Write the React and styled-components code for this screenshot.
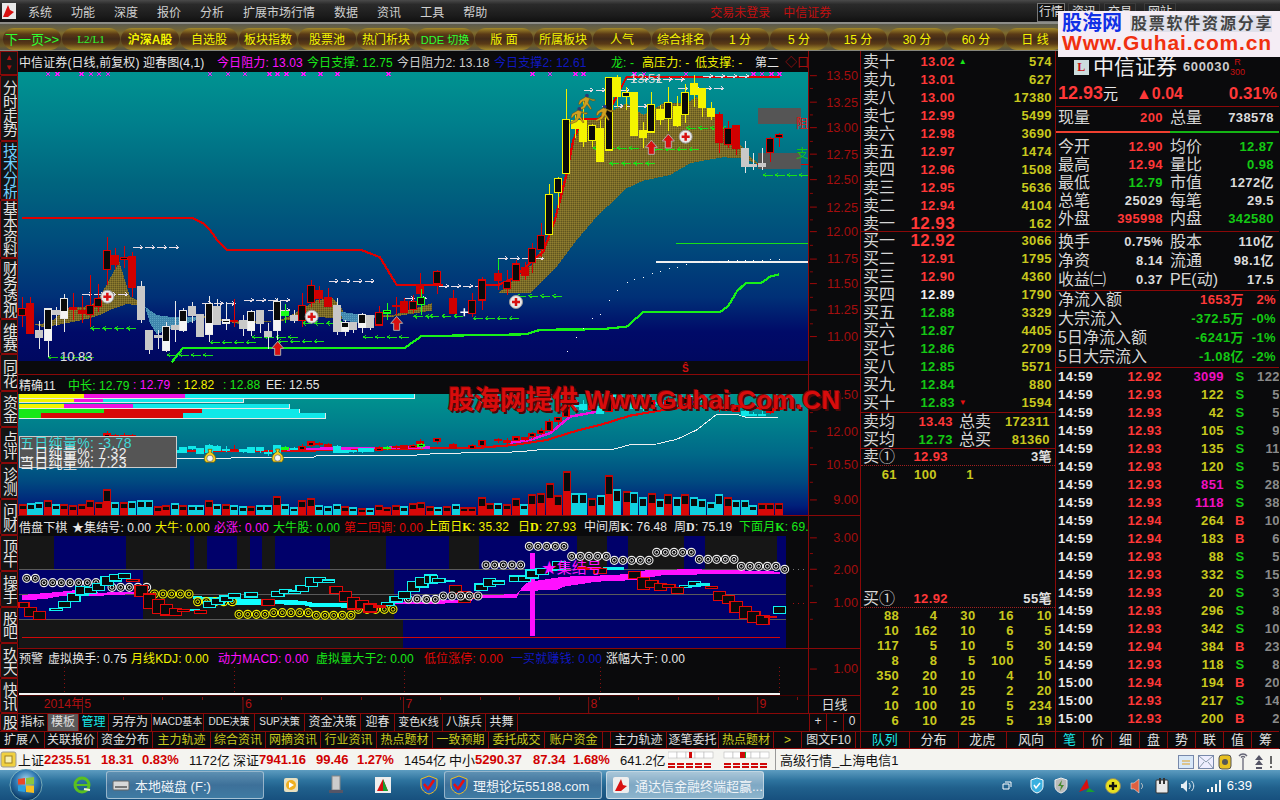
import React from "react";
import styled, { createGlobalStyle } from "styled-components";

const FONT = `"Liberation Sans","Noto Sans CJK SC",sans-serif`;
const RED = "#ff3838", YEL = "#c8c81e", GRN = "#14c814", LAB = "#d6d6d6", DR = "#8a0808";

const Global = createGlobalStyle`
  html, body { margin: 0; padding: 0; background: #0a0a0c; }
  * { box-sizing: border-box; }
  body { font-family: ${FONT}; }
`;
const Win = styled.div`width:1280px;height:800px;position:relative;overflow:hidden;display:flex;flex-direction:column;background:#0a0a0c;color:${LAB};font-family:${FONT};`;

/* ---------- menu + toolbar ---------- */
const MenuBar = styled.div`height:22px;display:flex;align-items:center;background:linear-gradient(#4a4a4a,#2a2a2a 20%,#1c1c1c 70%,#111);position:relative;padding-left:28px;font-size:12px;color:#d0d0d0;`;
const Logo = styled.svg`position:absolute;left:2px;top:3px;`;
const MenuItem = styled.span`margin-right:19px;white-space:nowrap;`;
const Alert = styled.span`color:#c01010;font-size:12px;white-space:nowrap;margin-left:${p => p.$ml}px;`;
const MiniTab = styled.span`position:absolute;top:3px;left:${p => p.$l}px;width:${p => p.$w}px;height:19px;text-align:center;font-size:12px;line-height:17px;color:#ddd;border:1px solid ${p => p.$on ? "#777" : "#3c3c3c"};background:${p => p.$on ? "#111" : "#262626"};`;
const Toolbar = styled.div`height:29px;display:flex;gap:1px;align-items:center;padding:3px 0 0 3px;border-top:2px solid #8d8d88;border-bottom:1px solid #85857c;background:linear-gradient(#5b5b4f,#7d6a2d 35%,#5a4420 60%,#6a5a28 85%,#55554a);overflow:hidden;`;
const Pill = styled.span`flex:0 0 58px;height:22px;border-radius:11px;display:flex;align-items:center;justify-content:center;font-size:${p => p.$s || 12}px;font-weight:${p => p.$b ? 700 : 400};font-family:${p => p.$serif ? `"Liberation Serif",` : ""}${FONT};color:${p => p.$c || "#f4f400"};white-space:nowrap;background:linear-gradient(#a38a2a,#5a3a16 28%,#412a18 50%,#5a3a16 72%,#a38a2a);`;

/* ---------- workspace ---------- */
const Work = styled.div`height:698px;display:grid;grid-template-columns:861px 195px 224px;`;
const LeftCol = styled.div`display:flex;flex-direction:column;border-right:1px solid ${DR};`;
const Body = styled.div`display:flex;height:680px;`;
const Rail = styled.div`width:18px;display:flex;flex-direction:column;background:#141414;`;
const RailArrows = styled.div`height:24px;flex:none;border:1px solid ${DR};display:flex;flex-direction:column;align-items:center;justify-content:center;gap:2px;color:#b01010;font-size:8px;line-height:8px;`;
const RailTab = styled.div`height:${p => p.$h}px;flex:none;border:1px solid ${DR};border-radius:2px 0 0 2px;display:flex;justify-content:center;align-items:center;overflow:hidden;font-size:15px;line-height:16px;white-space:nowrap;writing-mode:vertical-rl;text-orientation:upright;letter-spacing:-1px;color:${p => p.$on ? "#6fd0ff" : "#e2e2e2"};`;
const Panes = styled.div`width:842px;display:flex;flex-direction:column;`;
const Pane = styled.div`display:grid;grid-template-columns:790px 52px;height:${p => p.$h}px;flex:none;border-bottom:${p => p.$nb ? "0" : `1px solid ${DR}`};`;
const PaneMain = styled.div`display:flex;flex-direction:column;position:relative;min-width:0;`;
const Header = styled.div`height:${p => p.$h}px;display:flex;align-items:center;padding-left:1px;font-size:12px;letter-spacing:.1px;white-space:nowrap;overflow:hidden;flex:none;`;
const HItem = styled.span`flex:0 0 ${p => p.$w}px;color:${p => p.$c || "#e6e6e6"};white-space:nowrap;overflow:hidden;`;
const BK = styled.b`font-family:"Liberation Serif",serif;`;
const Plot = styled.svg`display:block;flex:none;shape-rendering:crispEdges;`;
const Plot1 = styled(Plot)`background:linear-gradient(#009391 0,#007f8c 18%,#00657f 38%,#004d7c 58%,#003077 78%,#000a68 90%,#000860 100%) no-repeat;background-size:100% 289px;`;
const Plot2 = styled(Plot)`background:linear-gradient(#00948f 0,#007f8c 25%,#006888 50%,#004a80 72%,#00207a 92%,#000868 100%);`;
const Plot3 = styled(Plot)`background:#0a0a0c;`;
const PlotDate = styled(Plot)`border-top:1px solid #400;`;
const Axis = styled.svg`display:block;border-left:1px solid ${DR};`;
const BookAxisCell = styled.div`display:flex;align-items:center;justify-content:center;height:18px;border-left:1px solid ${DR};border-top:1px solid ${DR};font-size:13px;line-height:16px;color:#ddd;`;
const InfoBox = styled.div`position:absolute;left:1px;top:61px;width:158px;height:32px;background:#555;border:1px solid #ccc;font-size:14px;line-height:11px;color:#eee;padding-top:1px;letter-spacing:.3px;white-space:nowrap;`;
const InfoLine = styled.div`color:${p => p.$c || "#eee"};height:10px;`;
const AxisColumn = styled.div`display:flex;flex-direction:column;min-height:0;`;

const ToolRow = styled.div`height:18px;flex:none;display:flex;border-top:1px solid ${DR};font-size:12px;`;
const Tool = styled.span`flex:0 0 ${p => p.$w}px;border-right:1px solid ${DR};text-align:center;line-height:16px;white-space:nowrap;overflow:hidden;font-size:${p => p.$s || 12}px;color:${p => p.$c || "#e0e0e0"};background:${p => p.$on ? "#5a5a5a" : "transparent"};`;
const ToolSpacer = styled.span`flex:1;`;
const Mini = styled.span`flex:0 0 17px;border-left:1px solid ${DR};text-align:center;line-height:15px;font-size:12px;color:#ddd;`;
const ExtRow = styled.div`height:18px;flex:none;display:flex;border-top:1px solid ${DR};border-bottom:1px solid ${DR};font-size:12px;`;

/* ---------- order book ---------- */
const Col = styled.div`display:flex;flex-direction:column;border-right:1px solid ${p => p.$nb ? "transparent" : DR};overflow:hidden;font-size:13px;font-weight:700;letter-spacing:.4px;line-height:16px;`;
const BookGroup = styled.div`height:${p => p.$h}px;padding-top:${p => p.$pt || 0}px;border-bottom:${p => p.$nb ? "none" : `1px solid ${DR}`};flex:none;`;
const Lab = styled.span`font-size:16px;line-height:18px;font-weight:400;letter-spacing:0;color:${LAB};white-space:nowrap;`;
const BookRow = styled.div`height:18px;display:grid;grid-template-columns:34px 58px 16px 1fr;grid-template-rows:18px;align-items:center;padding:0 3px 0 2px;`;
const Px = styled.span`text-align:right;color:${p => p.$c};font-size:${p => p.$big ? 17 : 13}px;`;
const Vol = styled.span`text-align:right;color:${p => p.$c || YEL};`;
const Flag = styled.span`font-size:8px;color:${p => p.$c};text-align:center;`;
const AvgRow = styled.div`height:18px;display:grid;grid-template-columns:34px 56px 6px 32px 1fr;grid-template-rows:18px;align-items:center;padding:0 5px 0 2px;`;
const QueHead = styled.div`height:17px;display:grid;grid-template-columns:34px 51px 1fr;grid-template-rows:16px;align-items:center;padding:0 3px 0 2px;border-bottom:1px dotted #a02020;`;
const Que = styled.div`height:15px;flex:none;display:grid;grid-template-columns:repeat(5,1fr);padding-right:3px;line-height:15px;color:${YEL};font-size:13px;`;
const QueCell = styled.span`text-align:right;`;
const QueOne = styled.div`height:17px;flex:none;display:grid;grid-template-columns:36px 40px 37px;line-height:17px;color:${YEL};text-align:right;`;
const BigGap = styled.div`height:${p => p.$h}px;flex:none;`;
const TabRow = styled.div`height:18px;display:flex;border-top:1px solid ${DR};border-bottom:1px solid ${DR};margin-top:auto;font-size:13px;font-weight:400;letter-spacing:0;flex:none;`;
const Tab = styled.span`flex:1;text-align:center;line-height:16px;border-right:1px solid ${DR};color:${p => p.$on ? "#18e8e8" : "#e0e0e0"};&:last-child{border-right:0;}`;

/* ---------- right panel ---------- */
const StockHead = styled.div`height:36px;display:flex;align-items:center;padding:0 0 4px 18px;flex:none;`;
const LBadge = styled.span`width:15px;height:15px;background:#cdd;color:#c81010;font:700 12px "Liberation Serif",serif;text-align:center;line-height:15px;margin-right:4px;`;
const Name = styled.span`font-size:21px;font-weight:400;letter-spacing:0;color:#f0f0f0;line-height:26px;`;
const Code = styled.span`font-size:13px;color:#ccc;margin-left:6px;letter-spacing:.6px;`;
const Small300 = styled.span`color:#c81010;font-size:9px;font-weight:400;line-height:10px;display:flex;flex-direction:column;align-items:center;letter-spacing:0;`;
const PriceRow = styled.div`height:20px;display:grid;grid-template-columns:78px 74px 1fr;grid-template-rows:13px;align-items:center;padding:0 2px 7px;border-bottom:1px solid ${DR};color:${RED};font-size:16px;flex:none;letter-spacing:0;`;
const PriceBig = styled.span`font-size:18px;white-space:nowrap;`;
const Yuan = styled.span`color:#e8e8e8;font-weight:400;font-size:15px;`;
const Pct = styled.span`text-align:right;font-size:17px;white-space:nowrap;`;
const Stat = styled.div`height:${p => p.$h || 18}px;display:grid;grid-template-columns:32px 73px 7px 32px 72px;grid-template-rows:18px;align-items:center;padding-left:2px;flex:none;`;
const StatV = styled.span`text-align:right;color:${p => p.$c || "#dcdcdc"};white-space:nowrap;`;
const StatGap = styled.div`height:2px;flex:none;`;
const Split = styled.div`height:2px;flex:none;display:flex;margin:4px 0 5px;`;
const SplitPart = styled.i`display:block;height:2px;background:${p => p.$c};width:${p => p.$w}%;`;
const Flow = styled.div`height:19px;display:grid;grid-template-columns:1fr 60px 32px;grid-template-rows:18px;align-items:center;padding:0 3px 0 2px;flex:none;`;
const Block = styled.div`height:${p => p.$h}px;padding-top:${p => p.$pt || 0}px;border-bottom:1px solid ${DR};flex:none;`;
const Tick = styled.div`height:18px;display:grid;grid-template-columns:38px 66px 62px 32px 24px;grid-template-rows:18px;align-items:center;padding-left:2px;flex:none;`;
const TickT = styled.span`color:#e8e8e8;`;
const TickP = styled.span`text-align:right;color:${RED};`;
const TickV = styled.span`text-align:right;color:${p => p.$c};`;
const TickS = styled.span`text-align:center;color:${p => p.$c};`;
const TickN = styled.span`text-align:right;color:#8a8a8a;`;

/* ---------- status + task ---------- */
const Status = styled.div`height:21px;flex:none;display:flex;align-items:center;background:#f4f4f0;color:#111;font-size:13px;position:relative;white-space:nowrap;`;
const SCell = styled.span`flex:0 0 ${p => p.$w}px;font-weight:${p => p.$r ? 700 : 400};color:${p => p.$r ? "#d00000" : "#111"};white-space:nowrap;`;
const SDivider = styled.span`flex:0 0 5px;height:21px;border-left:1px solid #999;`;
const Task = styled.div`height:30px;flex:none;display:flex;align-items:center;background:linear-gradient(#5d9cc0,#2d739e 35%,#20608c 60%,#17507e);position:relative;color:#f0f4f8;font-size:13px;`;
const TaskBtn = styled.div`width:${p => p.$w}px;height:28px;margin-left:${p => p.$ml}px;border-radius:3px;display:flex;align-items:center;gap:5px;padding-left:5px;border:1px solid rgba(255,255,255,.45);white-space:nowrap;overflow:hidden;background:${p => p.$on ? "linear-gradient(#a9c6d8,#7fa8c4 50%,#8cb4cc)" : "linear-gradient(#5d90b2,#3d7099 50%,#3f7ba3)"};`;
const TaskIcon = styled.svg`margin-right:${p => p.$mr || 0}px;margin-left:${p => p.$ml || 0}px;flex:none;`;
const Clock = styled.span`margin-left:auto;margin-right:28px;color:#fff;font-size:13px;`;
const Tray = styled.div`display:flex;align-items:center;gap:4px;position:absolute;left:${p => p.$l}px;top:${p => p.$t}px;`;
const TrayIcon = styled.svg`margin-right:${p => p.$mr || 0}px;flex:none;`;

/* ---------- overlays ---------- */
const Brand = styled.div`position:absolute;left:1058px;top:11px;width:222px;height:46px;background:#f5edf5;padding:2px 0 0 4px;`;
const BrandTop = styled.div`display:flex;align-items:center;height:20px;`;
const BrandBig = styled.span`color:#1030e6;font-size:20px;font-weight:700;line-height:20px;width:68px;white-space:nowrap;`;
const BrandBox = styled.span`font:700 16px/17px "Liberation Serif","Noto Sans CJK SC",serif;color:#444;width:17.8px;text-align:center;background:#dfe0ea;white-space:nowrap;`;
const BrandUrl = styled.div`color:#f03010;font-size:21px;font-weight:700;line-height:20px;letter-spacing:.85px;white-space:nowrap;`;
const Water = styled.div`position:absolute;left:448px;top:384px;color:#d80c0c;font-size:26px;font-weight:700;line-height:32px;white-space:nowrap;text-shadow:2px 2px 0 #4a0808,-1px -1px 0 #7a0606;`;

/* ---------- data ---------- */
const z9 = (x, y) => [x / 3, 200 + y / 3];
const z8 = (x, y) => [430 + x / 3, 60 + y / 3];
const z11 = (x, y) => [430 + x / 3, 270 + y / 3];
const z3 = (x, y) => [x / 3, 360 + y / 3];
const z12 = (x, y) => [x / 3, 510 + y / 3];
const z10 = (x, y) => [430 + x / 3, 510 + y / 3];
const pts = (f, a) => a.map(([x, y]) => f(x, y).map(v => v.toFixed(1)).join(",")).join(" ");

const C9 = [[67,292,325,347,380,"r"],[91,292,312,400,400,"R"],[118,362,393,411,447,"W"],[143,327,327,420,470,"B",388],[169,322,331,342,378,"W"],[193,282,295,354,396,"B",333],[220,280,324,329,360,"R"],[245,288,333,339,370,"R"],[271,226,316,344,380,"r"],[295,252,295,320,335,"r"],[322,112,151,208,255,"r"],[346,145,168,194,208,"R"],[373,138,172,179,205,"r"],[397,155,171,263,292,"R"],[424,243,259,357,368,"W"],[448,390,393,447,462,"W"],[475,390,408,413,447,"W"],[499,365,379,450,456,"B",422],[526,303,378,389,425,"W"],[550,325,331,390,395,"B",362],[577,305,319,345,368,"W"],[601,345,345,408,408,"W"],[628,288,311,402,426,"B",370],[652,298,319,372,372,"W"],[679,305,360,369,390,"B",365],[703,297,361,365,380,"R"],[730,345,363,384,408,"W"],[754,330,335,390,408,"B",362],[781,330,333,369,398,"W"],[805,370,396,408,447,"W"],[832,295,304,390,420,"B",360],[856,313,336,347,370,"G"],[883,330,348,360,370,"W"],[907,280,316,362,380,"r"],[934,240,256,308,320,"r"],[958,258,273,294,310,"R"],[985,265,294,318,320,"R"],[1010,295,316,393,405,"W"],[1036,360,367,393,408,"B",380],[1060,368,369,387,400,"W"],[1087,340,343,383,400,"B",370],[1111,345,346,381,390,"W"],[1138,317,337,375,378,"r"],[1162,310,331,339,360,"g"],[1189,292,316,320,345,"R"],[1213,295,304,336,340,"R"],[1240,285,305,329,340,"r"],[1264,268,293,313,345,"g"]];
const CZ = [[-30,10,45,70,100,"R"],[20,0,5,40,72,"r"],[70,60,85,130,130,"R"],[125,70,92,130,140,"r"],[155,20,30,90,120,"r"],[205,0,10,30,60,"R"],[230,0,35,55,75,"r"]];
const C8 = [[257,600,612,662,662,"r"],[284,605,622,645,660,"R"],[307,548,565,608,640,"r"],[334,490,526,568,590,"r"],[358,372,403,524,524,"y"],[385,352,355,398,445,"y"],[409,87,178,341,341,"y"],[436,165,182,204,235,"Y"],[460,120,183,243,262,"Y"],[487,192,196,242,262,"y"],[511,170,207,303,305,"Y"],[538,52,52,270,272,"y"],[562,45,54,110,140,"Y"],[589,80,97,110,150,"y"],[613,97,99,225,228,"Y"],[640,186,213,231,264,"Y"],[664,95,133,216,220,"y"],[691,135,150,177,194,"Y"],[715,82,127,176,212,"y"],[742,108,141,195,200,"Y"],[766,72,97,164,190,"y"],[793,45,72,102,140,"Y"],[817,85,86,141,172,"Y"],[844,125,147,168,180,"Y"],[868,155,165,248,280,"R"],[895,183,205,254,265,"r"],[919,197,198,266,285,"R"],[946,243,267,318,340,"W"],[970,280,314,320,330,"W"],[997,265,312,318,330,"W"],[1021,232,235,278,305,"r"],[1048,220,224,232,262,"r"]];
const toPage = (c, f) => { const [x] = f(c[0], 0); const y = v => f(0, v)[1]; return [x, y(c[1]), y(c[2]), y(c[3]), y(c[4]), c[5], c[6] != null ? y(c[6]) : null]; };
const candles = [...C9.map(c => toPage(c, z9)), ...CZ.map(c => toPage(c, z11)), ...C8.map(c => toPage(c, z8))].sort((a, b) => a[0] - b[0]);

const STY = {
  r: { w: "#e00000", s: "#e00000", f: "#0a0a0a" }, R: { w: "#e00000", s: "#d00000", f: "#d00000" },
  W: { w: "#e8e8e8", s: "#c8c8c8", f: "#c8c8c8" }, y: { w: "#f0f000", s: "#f4f400", f: "#0a0a0a" },
  Y: { w: "#f0f000", s: "#f4f400", f: "#f4f400" }, G: { w: "#18ff18", s: "#18ff18", f: "#18ff18" },
  g: { w: "#18ff18", s: "#18ff18", f: "#0a0a0a" }, B: { w: "#e8e8e8", s: "#e8e8e8", f: "#0a0a0a" },
  Cy: { w: "#10e8e8", s: "#10e8e8", f: "#10e8e8" },
};
const Candle = ({ c, map = v => v, mapType = t => t, w = 7 }) => {
  const [x, wt, bt, bb, wb, t0, sp] = c;
  const t = mapType(t0);
  const s = STY[t];
  const X = Math.round(x);
  return (
    <g>
      <line x1={X} x2={X} y1={map(wt)} y2={map(wb)} stroke={s.w} strokeWidth="1" />
      <rect x={X - w / 2} y={map(bt)} width={w} height={Math.max(1, map(bb) - map(bt))} fill={s.f} stroke={s.s} strokeWidth="1.2" />
      {sp != null && t === "B" ? <rect x={X - w / 2} y={map(sp)} width={w} height={map(bb) - map(sp)} fill="#f4f4f4" /> : null}
    </g>
  );
};
const Arrows = ({ f, x, y, n = 4, dir = 1, c = "#e6dce6", step = 36, len = 28 }) => {
  const out = [];
  for (let i = 0; i < n; i++) {
    const [a, b] = f(x + i * step, y);
    const [e] = f(x + i * step + len, y);
    const tip = dir > 0 ? e : a;
    out.push(<path key={i} d={`M${a} ${b}H${e}M${tip - dir * 3} ${b - 2}L${tip} ${b}L${tip - dir * 3} ${b + 2}`} stroke={c} fill="none" strokeWidth="1" />);
  }
  return <g>{out}</g>;
};
const RedArrow = ({ x, y }) => (
  <path d={`M${x} ${y - 7}L${x + 6} ${y}H${x + 3}V${y + 7}H${x - 3}V${y}H${x - 6}Z`} fill="#d81010" stroke="#aaa" strokeWidth="1" />
);
const Target = ({ x, y }) => (
  <g>
    <circle cx={x} cy={y} r="6.5" fill="#e8e8e8" stroke="#999" strokeWidth="1" />
    <path d={`M${x - 4} ${y}H${x + 4}M${x} ${y - 4}V${y + 4}`} stroke="#d81010" strokeWidth="2.5" />
  </g>
);
const Runner = ({ x, y }) => (
  <g transform={`translate(${x} ${y}) scale(1.2)`}>
    <circle cx="3" cy="-5" r="1.6" fill="#2a3a78" />
    <path d="M2-4l-5 3-1 3 1 .5 2-2.5 2-.5-1 4-5 3 1 1 5-2 2-3 3 4 1-.5-3-5 1-3 3 1.5 2-.5-.5-1-2 0z" fill="#d0a020" stroke="#5a4610" strokeWidth=".4" />
  </g>
);
const Bag = ({ x, y }) => (
  <g>
    <path d={`M${x - 2} ${y - 9}h4l-1 3c5 2 6 8 3 10h-8c-3-2-2-8 3-10z`} fill="#f2d020" stroke="#6a5a10" strokeWidth=".8" />
    <circle cx={x} cy={y} r="3.2" fill="#f4f4f4" stroke="#555" strokeWidth=".6" />
  </g>
);
const AutoG = styled.g`shape-rendering:auto;`;

const Chart1 = () => (
  <Plot1 width="790" height="302" viewBox="18 72 790 302">
    <defs>
      <pattern id="och" width="2" height="2" patternUnits="userSpaceOnUse">
        <rect width="2" height="2" fill="#7c6c28" /><rect width="1" height="1" fill="#8f7e30" /><rect x="1" y="1" width="1" height="1" fill="#5f5520" />
      </pattern>
      <pattern id="blu" width="2" height="2" patternUnits="userSpaceOnUse">
        <rect width="2" height="2" fill="#3f86ad" /><rect width="1" height="1" fill="#5aa0c0" />
      </pattern>
    </defs>
    <rect x="18" y="361" width="790" height="13" fill="#0a0a0c" />
    <polygon fill="url(#och)" points={pts(z9, [[100,372],[125,372],[160,360],[200,325],[270,318],[300,290],[330,235],[358,185],[390,290],[432,310],[432,318],[380,312],[330,330],[300,345],[270,355],[200,370],[130,382]])} />
    <polygon fill="url(#blu)" points={pts(z9, [[435,320],[470,345],[520,352],[560,352],[610,348],[610,352],[520,385],[470,402],[450,370]])} />
    <polygon fill="url(#och)" points={pts(z9, [[600,345],[700,362],[830,364],[870,348],[950,300],[1000,295],[1030,332],[1030,358],[950,350],[870,360],[720,372],[610,352]])} />
    <polygon fill="url(#blu)" points={pts(z9, [[1020,335],[1090,345],[1130,345],[1130,352],[1090,370],[1030,362]])} />
    <polygon fill="url(#och)" points={pts(z9, [[1130,345],[1180,345],[1295,310],[1295,332],[1180,350],[1130,352]])} />
    <polygon fill="url(#och)" points={pts(z8, [[205,700],[250,660],[310,610],[350,540],[390,430],[430,250],[460,180],[520,170],[560,145],[590,130],[610,145],[640,165],[700,130],[770,130],[800,110],[850,165],[880,200],[920,240],[960,290],[990,315],[940,295],[880,292],[830,300],[780,310],[720,345],[640,362],[590,385],[500,470],[440,540],[380,620],[340,660],[300,700]])} />
    <polyline fill="none" stroke="#e00000" strokeWidth="2.2" points={pts(z9, [[65,53],[575,53],[610,70],[630,90],[655,125],[680,150],[1085,150],[1140,172],[1190,255],[1330,255]])} />
    <polyline fill="none" stroke="#e00000" strokeWidth="2.2" points={pts(z8, [[150,675],[205,675],[245,657],[300,610],[340,575],[375,480],[410,340],[430,240],[455,178],[510,176],[550,130],[590,50],[1050,50]])} />
    <line x1={430 + 960 / 3} x2={430 + 1137 / 3} y1={60 + 313 / 3} y2={60 + 313 / 3} stroke="#e00000" strokeWidth="1.5" />
    <polyline fill="none" stroke="#18f018" strokeWidth="2.2" points={pts(z9, [[515,487],[550,443],[1215,443],[1265,408],[1290,408]])} />
    <polyline fill="none" stroke="#18f018" strokeWidth="2.2" points={pts(z11, [[0,198],[290,193],[320,182],[340,179],[510,178],[590,170],[640,126],[870,126],[895,108],[920,65],[948,38],[995,38],[1020,20],[1048,13]])} />
    <line x1={430 + 738 / 3} x2="808" y1={60 + 550 / 3} y2={60 + 550 / 3} stroke="#18e018" strokeWidth="1" />
    <line x1={430 + 678 / 3} x2="808" y1={60 + 606 / 3} y2={60 + 606 / 3} stroke="#f0f0f0" strokeWidth="1.2" />
    <line x1={430 + 205 / 3} x2={430 + 205 / 3} y1={60 + 595 / 3} y2={60 + 660 / 3} stroke="#18f018" strokeWidth="1" />
    {[[410,243],[437,202],[460,175],[487,145],[510,132],[538,90],[562,60],[590,36],[613,27],[640,20],[665,10],[690,2]].map(([x, y], i) => { const [a, b] = z11(x, y); return <rect key={i} x={a} y={b} width="1" height="1" fill="#fff" />; })}
    {[[717,625],[742,622],[767,612],[817,604],[845,604],[868,604],[895,600],[920,600],[945,600],[970,600],[995,600],[1020,597],[1048,597]].map(([x, y], i) => { const [a, b] = z8(x, y); return <rect key={i} x={a} y={b} width="1" height="1" fill="#fff" />; })}
    <rect x={430 + 984 / 3} y={60 + 144 / 3} width="43" height="16" fill="#555" />
    <rect x={430 + 984 / 3} y={60 + 280 / 3} width="43" height="16" fill="#555" />
    <g>
      <Arrows f={z9} x={400} y={142} /><Arrows f={z9} x={247} y={283} /><Arrows f={z9} x={987} y={243} /><Arrows f={z9} x={733} y={300} /><Arrows f={z9} x={605} y={310} n={3} /><Arrows f={z9} x={805} y={330} n={2} /><Arrows f={z9} x={1215} y={295} n={2} />
      <Arrows f={z8} x={205} y={595} /><Arrows f={z8} x={462} y={90} /><Arrows f={z8} x={515} y={138} /><Arrows f={z8} x={590} y={58} n={5} /><Arrows f={z8} x={820} y={48} /><Arrows f={z8} x={745} y={85} /><Arrows f={z11} x={28} y={48} />
      {[[273,385],[631,427],[757,411],[835,424],[908,370],[1090,411],[502,465]].map(([x, y], i) => <Arrows key={i} f={z9} x={x} y={y} dir={-1} c="#18e018" />)}
      {[[490,264],[540,310],[670,268],[770,204],[1000,345]].map(([x, y], i) => <Arrows key={i} f={z8} x={x} y={y} dir={-1} c="#18e018" />)}
      <Arrows f={z11} x={260} y={78} dir={-1} c="#18e018" /><Arrows f={z11} x={0} y={138} n={3} dir={-1} c="#18e018" /><Arrows f={z11} x={130} y={145} dir={-1} c="#18e018" />
      <Arrows f={z9} x={1242} y={349} n={2} dir={-1} c="#18e018" />
      <Arrows f={z9} x={145} y={472} n={4} dir={-1} c="#18c018" />
    </g>
    {candles.map((c, i) => <Candle key={i} c={c} />)}
    {[117,141,200,223,242,265,515,558,600,660,680,702,744,785,827,952,1305,1348,1410,1430,1555].map((x, i) => (
      <path key={i} d={`M${x / 2.45 - 2} 72l4 4m0-4l-4 4`} stroke="#ff18ff" strokeWidth="1" />
    ))}
    {[10,112,278,299,322,342].map((x, i) => (
      <path key={i} d={`M${640 + x / 2.45 - 2} 72l4 4m0-4l-4 4`} stroke="#ff18ff" strokeWidth="1" />
    ))}
    <AutoG>
      <RedArrow x={z9(833, 0)[0]} y={z9(0, 445)[1]} /><RedArrow x={z9(1190, 0)[0]} y={z9(0, 370)[1]} />
      <RedArrow x={z8(664, 0)[0]} y={z8(0, 262)[1]} /><RedArrow x={z8(715, 0)[0]} y={z8(0, 243)[1]} />
      <Target x={z9(322, 0)[0]} y={z9(0, 290)[1]} /><Target x={z9(935, 0)[0]} y={z9(0, 350)[1]} />
      <Target x={z8(767, 0)[0]} y={z8(0, 230)[1]} /><Target x={z11(258, 0)[0]} y={z11(0, 96)[1]} />
      <Runner x={z8(460, 0)[0]} y={z8(0, 125)[1]} /><Runner x={z8(437, 0)[0]} y={z8(0, 165)[1]} /><Runner x={z8(513, 0)[0]} y={z8(0, 158)[1]} />
      <path d={`M${z11(103,0)[0]-4} ${z11(0,127)[1]}h8M${z11(103,0)[0]} ${z11(0,127)[1]-4}v8`} stroke="#fff" strokeWidth="1.5" />
      <text x={z9(180, 0)[0]} y={z9(0, 482)[1]} fill="#e0e0e0" fontSize="13" fontFamily={FONT}>10.83</text>
      <text x={z8(600, 0)[0]} y={z8(0, 70)[1]} fill="#c8dcdc" fontSize="13" fontFamily={FONT}>13.51</text>
      <text x="796" y="128" fill="#e81010" fontSize="12" fontFamily={FONT}>阻</text>
      <text x="796" y="158" fill="#18c018" fontSize="12" fontFamily={FONT}>支</text>
      <text x="682" y="372" fill="#d01010" fontSize="10" fontWeight="700" fontFamily={FONT}>Ŝ</text>
    </AutoG>
  </Plot1>
);

const P2MAP = v => 394 + (v - 73) * 0.2256;
const P2TYPE = t => ({ W: "Cy", Y: "Cy", y: "r", B: "Cy" }[t] || t);
const VOLS3 = [[68,"R",10],[92,"C",11],[118,"C",12],[143,"R",14],[169,"C",10],[193,"R",10],[220,"R",9],[245,"R",10],[271,"R",14],[296,"R",12],[322,"R",25],[346,"C",12],[373,"R",12],[397,"C",13],[424,"C",14],[448,"C",14],[475,"R",8],[499,"R",9],[526,"C",11],[550,"R",9],[577,"C",9],[601,"C",9],[628,"R",14],[652,"C",10],[679,"R",10],[703,"C",9],[730,"C",8],[754,"R",8],[781,"C",9],[805,"C",9],[832,"R",18],[856,"C",10],[883,"C",7],[907,"R",14],[934,"R",16],[958,"C",9],[985,"C",8],[1010,"C",10],[1036,"R",8],[1060,"C",7],[1087,"R",6],[1111,"C",6],[1138,"R",9],[1162,"R",7],[1189,"R",9],[1213,"C",8],[1240,"R",11],[1264,"R",12]];
const VOLS11 = [[0,"R",8],[25,"C",7],[52,"R",8],[77,"C",10],[103,"R",7],[127,"R",7],[155,"R",17],[180,"R",11],[205,"C",11],[230,"R",10],[257,"R",16],[283,"C",10],[307,"R",20],[334,"R",21],[360,"R",31],[385,"R",19],[410,"R",43],[436,"C",21],[460,"C",21],[487,"R",16],[512,"C",19],[538,"R",39],[562,"C",25],[590,"R",23],[613,"C",22],[640,"C",17],[665,"R",21],[691,"C",15],[715,"R",20],[742,"C",17],[766,"R",20],[793,"C",17],[817,"C",15],[844,"C",12],[868,"C",20],[895,"R",17],[919,"C",14],[946,"C",14],[970,"C",9],[997,"R",11],[1021,"R",11],[1048,"R",11]];
const VolBar = ({ x, t, h }) => {
  const col = t === "R" ? "#d80808" : "#10d0e0";
  const X = Math.round(x);
  const inner = Math.round(h * 0.55);
  const isR = t === "R";
  return (
    <g>
      <rect x={X - 3.5} y={515 - h} width="7" height={h} fill="#0a0a0a" stroke={isR ? "#c00808" : "#10d0e0"} strokeWidth="1.2" />
      <rect x={X - 4} y={515 - inner} width="8" height={inner} fill={col} />
    </g>
  );
};
const PROFILE = [
  [103, 11, [["#f4f400", 58, 252], ["#f010e0", 252, 556], ["#10e8e8", 556, 1243]]],
  [116, 11, [["#f4f400", 58, 222], ["#f010e0", 222, 310], ["#10e8e8", 310, 730]]],
  [131, 12, [["#f4f400", 58, 193], ["#f010e0", 193, 398], ["#10e8e8", 398, 868]]],
  [146, 12, [["#18e818", 58, 313], ["#d80808", 313, 607], ["#10e8e8", 607, 898]]],
  [160, 13, [["#18e818", 58, 124], ["#d80808", 124, 548], ["#10e8e8", 548, 976]]],
];
const Chart2 = () => (
  <Plot2 width="790" height="121" viewBox="18 394 790 121">
    {VOLS3.map(([x, t, h], i) => <VolBar key={i} x={x / 3} t={t} h={h} />)}
    {VOLS11.map(([x, t, h], i) => <VolBar key={i} x={430 + x / 3} t={t} h={h} />)}
    <polyline fill="none" stroke="#f0f0f0" strokeWidth="1" points={pts(z3, [[480,295],[590,295],[940,292],[955,285],[1250,285],[1290,282]])} />
    <polyline fill="none" stroke="#f0f0f0" strokeWidth="1" points={pts(z11, [[0,550],[190,548],[270,545],[320,540],[550,538],[600,524],[680,522],[740,508],[800,480],[860,433],[920,433],[945,441],[1045,441]])} />
    <polyline fill="none" stroke="#e00808" strokeWidth="2.2" points={pts(z3, [[540,272],[900,272],[1290,265]])} />
    <polyline fill="none" stroke="#e00808" strokeWidth="2.2" points={pts(z11, [[0,535],[150,533],[250,525],[350,510],[430,485],[520,462],[600,437],[700,420],[800,408],[880,405],[950,412],[1040,420]])} />
    <polyline fill="none" stroke="#f010e0" strokeWidth="2.5" points={pts(z3, [[860,268],[1100,264],[1290,262]])} />
    <polyline fill="none" stroke="#f010e0" strokeWidth="2.5" points={pts(z11, [[240,518],[300,510],[360,490],[420,440],[500,425]])} />
    <polyline fill="none" stroke="#f010e0" strokeWidth="2" points={pts(z11, [[550,405],[680,398],[800,395]])} />
    {candles.filter(c => c[0] > 100).map((c, i) => <Candle key={i} c={c} map={P2MAP} mapType={P2TYPE} w={6} />)}
    {PROFILE.map(([y, h, segs], i) => (
      <g key={i}>
        {segs.map(([c, a, b], j) => <rect key={j} x={a / 3} y={360 + y / 3} width={(b - a) / 3} height={h / 3} fill={c} />)}
        <rect x={58 / 3} y={360 + (y + h) / 3} width={(segs[2][2] - 58) / 3} height="1" fill="#e8e8e8" />
        <rect x={segs[2][2] / 3} y={360 + y / 3} width="1" height={h / 3 + 1} fill="#e8e8e8" />
      </g>
    ))}
    <AutoG>
      <Bag x={630 / 3} y={360 + 295 / 3} /><Bag x={833 / 3} y={360 + 294 / 3} />
    </AutoG>
  </Plot2>
);

const TOP_PATCH_L = [[57,162],[378,570],[582,622],[712,750],[785,825],[990,1158]];
const TOP_PATCH_R = [[58,148],[442,532],[595,762],[826,1042]];
const CY12 = [[150,295,38,6],[175,275,37,18],[203,250,37,25],[227,229,37,26],[253,232,37,18],[278,221,35,20],[303,200,37,26],[328,193,37,20],[355,190,37,16],[570,298,28,3],[610,275,37,18],[635,266,37,17],[660,258,37,16],[685,250,37,14],[735,247,37,14],[815,244,37,16],[838,238,37,12],[865,243,37,8],[888,226,37,18],[916,202,37,28],[940,202,37,16],[967,210,37,8],[1145,277,37,9],[1170,260,37,16],[1195,245,37,20],[1222,215,37,30],[1247,203,37,28],[1273,195,37,25]];
const RD12 = [[57,278,30,14],[73,292,37,27],[100,305,37,23],[380,208,37,7],[405,226,37,34],[430,252,37,44],[457,268,37,42],[481,283,37,32],[508,295,37,22],[532,298,37,6],[583,301,37,10],[786,268,37,18],[990,229,37,22],[1018,244,37,30],[1042,263,37,34],[1068,272,37,24],[1092,282,37,24],[1120,288,37,5]];
const CY10 = [[0,197,22,22],[8,205,37,12],[45,213,28,2],[135,222,37,20],[160,205,37,24],[187,213,37,10],[238,198,37,16],[265,198,37,16],[288,180,37,24],[318,175,37,18],[368,155,37,25],[520,172,60,5],[748,226,37,7],[775,214,37,14],[800,220,37,5],[1030,289,37,22]];
const RD10 = [[58,226,37,24],[85,245,37,32],[110,250,37,15],[442,172,65,5],[492,175,37,15],[595,184,37,22],[622,202,37,37],[647,211,37,22],[673,220,37,22],[698,224,37,8],[724,232,37,18],[826,229,37,6],[850,244,37,28],[877,256,37,24],[900,274,37,33],[928,290,37,36],[953,305,37,33],[980,317,37,26],[1003,319,37,2]];
const series = (arr, st = 26) => arr.flatMap(([x, y, n = 5]) => Array.from({ length: n }, (_, i) => [x + i * st, y]));
const W12 = series([[80,205,2],[132,218,7],[336,232,5],[1225,267,3]]);
const Y12 = series([[463,252,5],[593,275,5],[717,313,4],[821,308,5],[949,316,5],[1075,298,5]]);
const W10 = series([[-10,268,2],[40,258,5],[168,165,5],[298,109,5],[425,139,5],[553,151,5],[680,127,5],[808,148,5],[934,169,5],[1064,178,1]]);
const Ring = ({ p, c }) => (
  <AutoG>
    <circle cx={p[0]} cy={p[1]} r="4" fill="#0a0a0c" stroke={c} strokeWidth="1.1" />
    <circle cx={p[0]} cy={p[1]} r="1.9" fill="none" stroke={c} strokeWidth="1" />
  </AutoG>
);
const Boxes = ({ list, f, c }) => list.map(([x, y, w, h], i) => {
  const [a, b] = f(x, y);
  return <rect key={i} x={a} y={b} width={w / 3} height={h / 3} fill="#0a0a0c" stroke={c} strokeWidth="1.2" />;
});
const Chart3 = () => (
  <Plot3 width="790" height="112" viewBox="18 536 790 112">
    <rect x="19" y="536" width="767" height="112" fill="#00006a" />
    {TOP_PATCH_L.map(([a, b], i) => <rect key={i} x={a / 3} y="536" width={(b - a) / 3} height="33" fill="#161616" />)}
    {TOP_PATCH_R.map(([a, b], i) => <rect key={i} x={430 + a / 3} y="536" width={(b - a) / 3} height="33" fill="#161616" />)}
    <rect x={430 / 3} y="569" width={(1182 - 430) / 3} height="50" fill="#161616" />
    <rect x="19" y="619" width={(1210 - 57) / 3} height="29" fill="#161616" />
    {[569, 594, 619].map(y => <line key={y} x1="19" x2="786" y1={y} y2={y} stroke="#5a5a5a" strokeWidth="1" />)}
    <line x1="22" x2="780" y1="637" y2="637" stroke="#d00808" strokeWidth="1" />
    <polygon fill="#ff10ff" points={pts(z12, [[65,255],[185,245],[230,240],[300,248],[405,245],[405,252],[300,257],[185,258],[130,268],[65,270]])} />
    <polygon fill="#ff10ff" points={pts(z12, [[1182,278],[1290,275],[1290,282],[1182,283]])} />
    <polygon fill="#10ffff" points={pts(z12, [[580,258],[700,265],[800,268],[910,272],[940,278],[1045,278],[1045,293],[930,290],[910,285],[830,283],[700,285],[650,280],[580,268]])} />
    <polygon fill="#ff10ff" points={pts(z10, [[0,272],[130,268],[130,255],[260,253],[285,222],[300,215],[400,200],[500,197],[600,192],[650,180],[780,178],[900,180],[1050,185],[1050,192],[900,192],[700,195],[620,210],[500,215],[400,230],[380,240],[270,243],[260,263],[130,265],[120,278],[0,282]])} />
    <rect x={430 + 300 / 3} y={510 + 128 / 3} width="5" height={250 / 3} fill="#ff10ff" />
    {W12.map((p, i) => <Ring key={i} p={z12(p[0], p[1])} c="#f0f0f0" />)}
    {Y12.map((p, i) => <Ring key={i} p={z12(p[0], p[1])} c="#f4f400" />)}
    <Boxes list={CY12} f={z12} c="#10f0f0" /><Boxes list={RD12} f={z12} c="#e00808" />
    <Boxes list={CY10} f={z10} c="#10f0f0" /><Boxes list={RD10} f={z10} c="#e00808" />
    {W10.map((p, i) => <Ring key={i} p={z10(p[0], p[1])} c="#f0f0f0" />)}
    <AutoG><text x={430 + 335 / 3} y={510 + 190 / 3} fill="#ff10ff" fontSize="15" fontFamily={FONT}>★集结号</text></AutoG>
    <line x1="793" x2="808" y1="569" y2="569" stroke="#777" strokeDasharray="1 4" />
    <line x1="793" x2="808" y1="603" y2="603" stroke="#a01010" strokeDasharray="1 4" />
  </Plot3>
);
const Chart4 = () => (
  <Plot width="790" height="30" viewBox="18 665 790 30">
    {[64, 234, 404, 600, 779].map(x => <line key={x} x1={x} x2={x} y1="667" y2="695" stroke="#8a1010" strokeDasharray="1 3" />)}
    <line x1="19" x2="780" y1="694" y2="694" stroke="#f4f4f4" strokeWidth="1.5" />
  </Plot>
);
const DateAxis = () => (
  <PlotDate width="790" height="18" viewBox="18 695 790 18">
    <AutoG fontFamily={FONT} fontSize="13" fill="#b01010">
      <text x="22" y="708">2014年</text>
      {[[63,"5"],[233,"6"],[403,"7"],[599,"8"],[778,"9"]].map(([x, t]) => <g key={t}><line x1={x} x2={x} y1="696" y2="713" stroke="#8a1010" /><text x={x + 2} y="708">{t}</text></g>)}
    </AutoG>
    {Array.from({ length: 18 }, (_, i) => 106 + i * 42).map(x => <line key={x} x1={x} x2={x} y1="696" y2="699" stroke="#8a1010" />)}
  </PlotDate>
);
const AxisSvg = ({ h, top, labels, minor = [], fs = 13 }) => (
  <Axis width="52" height={h} viewBox={`808 ${top} 52 ${h}`}>
    {minor.map(y => <line key={y} x1="809" x2="812" y1={y} y2={y} stroke="#8a0808" />)}
    {labels.map(([t, y]) => (
      <g key={t}>
        <line x1="809" x2="816" y1={y} y2={y} stroke="#a00808" />
        <text x="858" y={y + 4.5} textAnchor="end" fill="#a40e0e" fontSize={fs} fontFamily={FONT}>{t}</text>
      </g>
    ))}
  </Axis>
);

const MENU = ["系统","功能","深度","报价","分析","扩展市场行情","数据","资讯","工具","帮助"];
const PILLS = [
  { t: "下一页>>", c: "#30ff30", s: 13 }, { t: "L2/L1", c: "#30ff30", s: 11, serif: 1 }, { t: "沪深A股", b: 1 }, { t: "自选股" },
  { t: "板块指数" }, { t: "股票池" }, { t: "热门析块" }, { t: "DDE 切换", c: "#30ff30", s: 11 }, { t: "版 面" }, { t: "所属板块" },
  { t: "人气" }, { t: "综合排名" }, { t: "1 分" }, { t: "5 分" }, { t: "15 分" }, { t: "30 分" }, { t: "60 分" }, { t: "日 线" },
];
const RAIL = [["分时走势",66],["技术分析",59,1],["基本资料",58],["财务透视",61],["维赛",35],["同花",37],["资金",36],["点评",36],["诊测",36],["问财",36],["顶牛",36],["操手",36],["股吧",36],["玖天",35],["快讯",35],["股",18]];
const SELL = [["卖十","13.02","574"],["卖九","13.01","627"],["卖八","13.00","17380"],["卖七","12.99","5499"],["卖六","12.98","3690"],["卖五","12.97","1474"],["卖四","12.96","1508"],["卖三","12.95","5636"],["卖二","12.94","4104"],["卖一","12.93","162"]];
const BUY = [["买一","12.92","3066",RED,1],["买二","12.91","1795",RED],["买三","12.90","4360",RED],["买四","12.89","1790","#f0f0f0"],["买五","12.88","3329",GRN],["买六","12.87","4405",GRN],["买七","12.86","2709",GRN],["买八","12.85","5571",GRN],["买九","12.84","880",GRN],["买十","12.83","1594",GRN]];
const QUE = [[88,4,30,16,10],[10,162,10,6,5],[117,5,10,5,30],[8,8,5,100,5],[350,20,10,4,10],[2,10,25,2,20],[10,100,10,5,234],[6,10,25,5,19]];
const TICKS = [["14:59","12.92","3099","S",122,"#f010c0"],["14:59","12.93","122","S",5],["14:59","12.93","42","S",5],["14:59","12.93","105","S",9],["14:59","12.93","135","S",11],["14:59","12.93","120","S",5],["14:59","12.93","851","S",28,"#f010c0"],["14:59","12.93","1118","S",38,"#f010c0"],["14:59","12.94","264","B",10],["14:59","12.94","183","B",6],["14:59","12.93","88","S",5],["14:59","12.93","332","S",15],["14:59","12.93","20","S",3],["14:59","12.93","296","S",8],["14:59","12.93","342","S",10],["14:59","12.94","384","B",23],["14:59","12.93","118","S",8],["15:00","12.94","194","B",20],["15:00","12.93","217","S",14],["15:00","12.93","200","B",2]];

const StatRow = ({ a, av, ac, b, bv, bc, h }) => (
  <Stat $h={h}><Lab>{a}</Lab><StatV $c={ac}>{av}</StatV><span /><Lab>{b}</Lab><StatV $c={bc}>{bv}</StatV></Stat>
);

const WinFlag = () => (
  <TaskIcon width="40" height="32" viewBox="0 0 40 32" $ml={6}>
    <defs>
      <radialGradient id="orb" cx="50%" cy="35%" r="60%"><stop offset="0" stopColor="#a8d8f0" /><stop offset=".55" stopColor="#2f78b0" /><stop offset="1" stopColor="#0c3c68" /></radialGradient>
    </defs>
    <circle cx="20" cy="16" r="16" fill="url(#orb)" stroke="#9cc" strokeWidth=".7" />
    <path d="M12 10l7-1v6.5h-7z" fill="#e8482a" /><path d="M20 9l8-1v7.5h-8z" fill="#8cc63f" />
    <path d="M12 16.5h7V23l-7-1z" fill="#2aa0e0" /><path d="M20 16.5h8V24l-8-1z" fill="#f8c020" />
  </TaskIcon>
);
const IE = () => (
  <TaskIcon width="20" height="20" viewBox="0 0 20 20" $ml={26}>
    <circle cx="10" cy="10" r="7" fill="none" stroke="#5ac020" strokeWidth="3" />
    <path d="M4 10h12" stroke="#5ac020" strokeWidth="2" />
    <path d="M12 14l6 1" stroke="#f0f0e0" strokeWidth="2" />
  </TaskIcon>
);
const Disk = () => (
  <TaskIcon width="18" height="14" viewBox="0 0 18 14"><rect x="1" y="3" width="16" height="9" rx="1" fill="#d8d8d8" stroke="#666" /><rect x="3" y="8" width="12" height="2" fill="#777" /></TaskIcon>
);
const TdxIcon = ({ s = 18 }) => (
  <TaskIcon width={s} height={s} viewBox="0 0 18 18"><rect x="1" y="1" width="16" height="16" rx="2" fill="#eee" /><path d="M3 15L9 3l2 6 4 1-6 5z" fill="#d81010" /></TaskIcon>
);
const CheckLogo = () => (
  <TaskIcon width="18" height="20" viewBox="0 0 18 20"><path d="M9 1l8 3v6c0 5-4 8-8 9-4-1-8-4-8-9V4z" fill="#2060c0" stroke="#f0c020" /><path d="M4 9l4 5 6-9" fill="none" stroke="#e81010" strokeWidth="2.5" /></TaskIcon>
);
const SmallApps = () => (
  <>
    <TaskIcon width="18" height="18" viewBox="0 0 18 18" $ml={18} $mr={28}><rect x="2" y="2" width="14" height="14" rx="2" fill="#e8e0c0" /><circle cx="9" cy="9" r="5" fill="#f0b020" /><path d="M7 6l5 3-5 3z" fill="#fff" /></TaskIcon>
    <TaskIcon width="16" height="20" viewBox="0 0 16 20" $mr={30}><rect x="4" y="1" width="8" height="14" fill="#ccc" stroke="#888" /><rect x="1" y="15" width="14" height="3" fill="#556" /></TaskIcon>
    <TaskIcon width="18" height="18" viewBox="0 0 18 18" $mr={28}><rect x="1" y="1" width="16" height="16" fill="#eee" /><path d="M3 15L9 3l5 12z" fill="#d81010" /><path d="M9 3l5 12H9z" fill="#18a030" /></TaskIcon>
    <CheckLogo />
  </>
);
const Meter = () => (
  <TrayIcon width="104" height="20" viewBox="0 0 104 20" $mr={3}>
    {[0, 9, 18, 27, 36, 45, 54, 63, 72, 81, 90].map((x, i) => (
      <g key={i}>
        {i !== 5 ? <rect x={x + (i > 5 ? 2 : 0)} y="2" width="9" height="6" fill="#fff" stroke="#bbb" strokeWidth=".6" /> : null}
        {i !== 5 ? <rect x={x + (i > 5 ? 2 : 0)} y="13" width="7" height="2" fill="#d00808" /> : null}
        {i !== 5 ? <rect x={x + (i > 5 ? 2 : 0)} y="16" width="7" height="2" fill="#d00808" /> : null}
      </g>
    ))}
    <rect x="21" y="2" width="3" height="6" fill="#d00808" /><rect x="72" y="2" width="5" height="6" fill="#d00808" /><rect x="77" y="2" width="1" height="6" fill="#18a030" />
  </TrayIcon>
);

export default function App() {
  return (
    <Win>
      <Global />
      <MenuBar>
        <Logo width="14" height="16" viewBox="0 0 14 16"><rect width="14" height="16" fill="#e8e8e8" /><path d="M1 14L6 2l2 5 4 2-6 5z" fill="#d81010" /></Logo>
        {MENU.map(m => <MenuItem key={m}>{m}</MenuItem>)}
        <Alert $ml={204}>交易未登录</Alert><Alert $ml={13}>中信证券</Alert>
        <MiniTab $l={1037} $w={28} $on>行情</MiniTab><MiniTab $l={1068} $w={32}>资讯</MiniTab><MiniTab $l={1104} $w={32}>交易</MiniTab><MiniTab $l={1144} $w={32}>网站</MiniTab>
      </MenuBar>
      <Toolbar>
        {PILLS.map(p => <Pill key={p.t} $c={p.c} $s={p.s} $b={p.b} $serif={p.serif}>{p.t}</Pill>)}
      </Toolbar>
      <Work>
        <LeftCol>
          <Body>
            <Rail>
              <RailArrows><span>▲</span><span>▼</span></RailArrows>
              {RAIL.map(([t, h, on]) => <RailTab key={t} $h={h} $on={on}>{t}</RailTab>)}
            </Rail>
            <Panes>
              <Pane $h={324}>
                <PaneMain>
                  <Header $h={21}>
                    <HItem $w={198}>中信证券(日线,前复权) 迎春图(4,1)</HItem>
                    <HItem $w={90} $c="#ff10ff">今日阻力: 13.03</HItem>
                    <HItem $w={90} $c="#18e818">今日支撑: 12.75</HItem>
                    <HItem $w={97} $c="#cfcfcf">今日阻力2: 13.18</HItem>
                    <HItem $w={117} $c="#1018c0">今日支撑2: 12.61</HItem>
                    <HItem $w={31} $c="#18e818">龙: -</HItem>
                    <HItem $w={53} $c="#f4f400">高压力: -</HItem>
                    <HItem $w={60} $c="#f4f400">低支撑: -</HItem>
                    <HItem $w={30}>第二</HItem>
                    <HItem $w={12} $c="#a01010">◇</HItem>
                    <HItem $w={11} $c="#a01010">口</HItem>
                  </Header>
                  <Chart1 />
                </PaneMain>
                <AxisSvg h={323} top={51} labels={[["13.50",73],["13.25",100],["13.00",126],["12.75",153],["12.50",179],["12.25",207],["12.00",232],["11.75",260],["11.50",285],["11.25",312],["11.00",339]]} minor={[86,113,140,166,193,220,246,273,299,326]} />
              </Pane>
              <Pane $h={141}>
                <PaneMain>
                  <Header $h={19}>
                    <HItem $w={49}>精确11</HItem>
                    <HItem $w={65} $c="#18e818">中长: 12.79</HItem>
                    <HItem $w={44} $c="#ff10ff">: 12.79</HItem>
                    <HItem $w={46} $c="#f4f400">: 12.82</HItem>
                    <HItem $w={43} $c="#18e818">: 12.88</HItem>
                    <HItem $w={60}>EE: 12.55</HItem>
                  </Header>
                  <Chart2 />
                  <InfoBox>
                    <InfoLine $c="#40d8d8">五日纯量%: -3.78</InfoLine>
                    <InfoLine>二日纯量%: 7.32</InfoLine>
                    <InfoLine>当日纯量%: 7.23</InfoLine>
                  </InfoBox>
                </PaneMain>
                <AxisSvg h={140} top={375} labels={[["13.50",394],["12.00",431],["10.50",465],["9.00",501]]} minor={[412,448,483]} />
              </Pane>
              <Pane $h={133}>
                <PaneMain>
                  <Header $h={20}>
                    <HItem $w={53}>借盘下棋</HItem>
                    <HItem $w={83}>★集结号: 0.00</HItem>
                    <HItem $w={59} $c="#f4f400">大牛: 0.00</HItem>
                    <HItem $w={59} $c="#ff10ff">必涨: 0.00</HItem>
                    <HItem $w={71} $c="#18e818">大牛股: 0.00</HItem>
                    <HItem $w={82} $c="#e00808">第二回调: 0.00</HItem>
                    <HItem $w={92} $c="#f4f400">上面日<BK>K</BK>: 35.32</HItem>
                    <HItem $w={66} $c="#f4f400">日<BK>D</BK>: 27.93</HItem>
                    <HItem $w={90}>中间周<BK>K</BK>: 76.48</HItem>
                    <HItem $w={65}>周<BK>D</BK>: 75.19</HItem>
                    <HItem $w={70} $c="#18e818">下面月<BK>K</BK>: 69.</HItem>
                  </Header>
                  <Chart3 />
                </PaneMain>
                <AxisSvg h={132} top={516} labels={[["3.00",537],["2.00",569],["1.00",603]]} minor={[553,586,620]} />
              </Pane>
              <Pane $h={64} $nb>
                <PaneMain>
                  <Header $h={16}>
                    <HItem $w={29}>预警</HItem>
                    <HItem $w={83}>虚拟换手: 0.75</HItem>
                    <HItem $w={87} $c="#f4f400">月线KDJ: 0.00</HItem>
                    <HItem $w={98} $c="#ff10ff">动力MACD: 0.00</HItem>
                    <HItem $w={108} $c="#18e818">虚拟量大于2: 0.00</HItem>
                    <HItem $w={87} $c="#e00808">低位涨停: 0.00</HItem>
                    <HItem $w={95} $c="#1018c0">一买就赚钱: 0.00</HItem>
                    <HItem $w={85}>涨幅大于: 0.00</HItem>
                  </Header>
                  <Chart4 />
                  <DateAxis />
                </PaneMain>
                <AxisColumn>
                  <AxisSvg h={46} top={649} labels={[["1.00",669]]} />
                  <BookAxisCell>日线</BookAxisCell>
                </AxisColumn>
              </Pane>
              <ToolRow>
                <Tool $w={30}>指标</Tool><Tool $w={31} $on>模板</Tool><Tool $w={30} $c="#18e8e8">管理</Tool><Tool $w={43}>另存为</Tool><Tool $w={52} $s={10}>MACD基本</Tool><Tool $w={51} $s={10}>DDE决策</Tool><Tool $w={50} $s={10}>SUP决策</Tool><Tool $w={56}>资金决策</Tool><Tool $w={34}>迎春</Tool><Tool $w={48} $s={11}>变色K线</Tool><Tool $w={43}>八旗兵</Tool><Tool $w={32}>共舞</Tool>
                <ToolSpacer />
                <Mini>+</Mini><Mini>-</Mini><Mini>0</Mini>
              </ToolRow>
            </Panes>
          </Body>
          <ExtRow>
            <Tool $w={45}>扩展∧</Tool><Tool $w={53}>关联报价</Tool><Tool $w={55}>资金分布</Tool><Tool $w={58} $c="#c8c81e">主力轨迹</Tool><Tool $w={55} $c="#c8c81e">综合资讯</Tool><Tool $w={55} $c="#c8c81e">网摘资讯</Tool><Tool $w={56} $c="#c8c81e">行业资讯</Tool><Tool $w={56} $c="#c8c81e">热点题材</Tool><Tool $w={56} $c="#c8c81e">一致预期</Tool><Tool $w={56} $c="#c8c81e">委托成交</Tool><Tool $w={58} $c="#c8c81e">账户资金</Tool><Tool $w={8} />
            <Tool $w={56}>主力轨迹</Tool><Tool $w={52}>逐笔委托</Tool><Tool $w={55} $c="#c8c81e">热点题材</Tool><Tool $w={28} $c="#c8c81e">&gt;</Tool><Tool $w={54}>图文F10</Tool>
          </ExtRow>
        </LeftCol>
        <Col>
          <BookGroup $h={181} $pt={2}>
            {SELL.map((r, i) => (
              <BookRow key={r[0]}>
                <Lab>{r[0]}</Lab><Px $c={RED} $big={i === 9}>{r[1]}</Px><Flag $c="#18e818">{i === 0 ? "▲" : ""}</Flag><Vol>{r[2]}</Vol>
              </BookRow>
            ))}
          </BookGroup>
          <BookGroup $h={181}>
            {BUY.map(r => (
              <BookRow key={r[0]}>
                <Lab>{r[0]}</Lab><Px $c={r[3]} $big={r[4]}>{r[1]}</Px><Flag $c="#e81010">{r[0] === "买十" ? "▼" : ""}</Flag><Vol>{r[2]}</Vol>
              </BookRow>
            ))}
          </BookGroup>
          <BookGroup $h={36}>
            <AvgRow><Lab>卖均</Lab><Px $c={RED}>13.43</Px><span /><Lab>总卖</Lab><Vol>172311</Vol></AvgRow>
            <AvgRow><Lab>买均</Lab><Px $c={GRN}>12.73</Px><span /><Lab>总买</Lab><Vol>81360</Vol></AvgRow>
          </BookGroup>
          <QueHead><Lab>卖①</Lab><Px $c={RED}>12.93</Px><Vol $c="#e0e0e0">3笔</Vol></QueHead>
          <QueOne><span>61</span><span>100</span><span>1</span></QueOne>
          <BigGap $h={108} />
          <QueHead><Lab>买①</Lab><Px $c={RED}>12.92</Px><Vol $c="#e0e0e0">55笔</Vol></QueHead>
          {QUE.map((r, i) => <Que key={i}>{r.map((v, j) => <QueCell key={j}>{v}</QueCell>)}</Que>)}
          <TabRow><Tab $on>队列</Tab><Tab>分布</Tab><Tab>龙虎</Tab><Tab>风向</Tab></TabRow>
        </Col>
        <Col $nb>
          <StockHead>
            <LBadge>L</LBadge><Name>中信证券</Name><Code>600030</Code>
            <Small300><span>R</span><span>300</span></Small300>
          </StockHead>
          <PriceRow><PriceBig>12.93<Yuan>元</Yuan></PriceBig><span>▲0.04</span><Pct>0.31%</Pct></PriceRow>
          <StatGap />
          <StatRow a="现量" av="200" ac={RED} b="总量" bv="738578" />
          <Split><SplitPart $c="#f04030" $w={51} /><SplitPart $c="#14b414" $w={49} /></Split>
          <Block $h={94}>
            <StatRow a="今开" av="12.90" ac={RED} b="均价" bv="12.87" bc={GRN} />
            <StatRow a="最高" av="12.94" ac={RED} b="量比" bv="0.98" bc={GRN} />
            <StatRow a="最低" av="12.79" ac={GRN} b="市值" bv="1272亿" />
            <StatRow a="总笔" av="25029" b="每笔" bv="29.5" />
            <StatRow a="外盘" av="395998" ac={RED} b="内盘" bv="342580" bc={GRN} />
          </Block>
          <Block $h={59} $pt={1}>
            <StatRow h={19} a="换手" av="0.75%" b="股本" bv="110亿" />
            <StatRow h={19} a="净资" av="8.14" b="流通" bv="98.1亿" />
            <StatRow h={19} a="收益㈡" av="0.37" b="PE(动)" bv="17.5" />
          </Block>
          <Block $h={77}>
            <Flow><Lab>净流入额</Lab><StatV $c={RED}>1653万</StatV><StatV $c={RED}>2%</StatV></Flow>
            <Flow><Lab>大宗流入</Lab><StatV $c={GRN}>-372.5万</StatV><StatV $c={GRN}>-0%</StatV></Flow>
            <Flow><Lab>5日净流入额</Lab><StatV $c={GRN}>-6241万</StatV><StatV $c={GRN}>-1%</StatV></Flow>
            <Flow><Lab>5日大宗流入</Lab><StatV $c={GRN}>-1.08亿</StatV><StatV $c={GRN}>-2%</StatV></Flow>
          </Block>
          {TICKS.map((t, i) => (
            <Tick key={i}>
              <TickT>{t[0]}</TickT><TickP>{t[1]}</TickP><TickV $c={t[5] || YEL}>{t[2]}</TickV>
              <TickS $c={t[3] === "S" ? GRN : RED}>{t[3]}</TickS><TickN>{t[4]}</TickN>
            </Tick>
          ))}
          <TabRow>{["笔","价","细","盘","势","联","值","筹"].map((t, i) => <Tab key={t} $on={i === 0}>{t}</Tab>)}</TabRow>
        </Col>
      </Work>
      <Status>
        <TrayIcon width="18" height="17" viewBox="0 0 18 17"><rect x="1" y="1" width="15" height="15" rx="2" fill="#f0d040" stroke="#999" /><rect x="5" y="5" width="7" height="7" fill="#f8f0b0" stroke="#a08020" /></TrayIcon>
        <SCell $w={25}>上证</SCell><SCell $w={57} $r>2235.51</SCell><SCell $w={41} $r>18.31</SCell><SCell $w={47} $r>0.83%</SCell><SCell $w={44}>1172亿</SCell><SCell $w={25}>深证</SCell><SCell $w={57} $r>7941.16</SCell><SCell $w={41} $r>99.46</SCell><SCell $w={47} $r>1.27%</SCell><SCell $w={45}>1454亿</SCell><SCell $w={25}>中小</SCell><SCell $w={58} $r>5290.37</SCell><SCell $w={40} $r>87.34</SCell><SCell $w={47} $r>1.68%</SCell><SCell $w={48}>641.2亿</SCell>
        <Meter />
        <SDivider />
        <SCell $w={300}>高级行情_上海电信1</SCell>
        <Tray $l={1178} $t={3}>
          <svg width="16" height="14" viewBox="0 0 16 14"><rect x=".5" y=".5" width="15" height="13" fill="#d8e8f8" stroke="#78a" /><path d="M4 6h8M4 9h8" stroke="#e0a020" /></svg>
          <svg width="16" height="14" viewBox="0 0 16 14"><rect x=".5" y=".5" width="15" height="13" fill="#eef" stroke="#78a" /><path d="M1 1l7 6 7-6M1 13l5-6M15 13l-5-6" fill="none" stroke="#89a" /></svg>
          <svg width="14" height="16" viewBox="0 0 14 16"><rect x="1" y="1" width="12" height="14" rx="3" fill="#e8c020" stroke="#555" /><circle cx="7" cy="8" r="3" fill="#555" /></svg>
          <svg width="14" height="20" viewBox="0 0 14 20"><path d="M7 6v13M4 19h6M3 4a5 5 0 0 1 8 0M5 5.5a2.5 2.5 0 0 1 4 0" stroke="#667" fill="none" strokeWidth="1.3" /></svg>
          <svg width="10" height="16" viewBox="0 0 10 16"><path d="M5 1l4 5H1zM5 6l4 5H1zM2 13h6v2H2z" fill="#556" /></svg>
          <svg width="6" height="14" viewBox="0 0 6 14"><path d="M3 1v8M3 11v2" stroke="#666" strokeWidth="2" /></svg>
        </Tray>
      </Status>
      <Task>
        <WinFlag /><IE />
        <TaskBtn $w={158} $ml={14}><Disk />本地磁盘 (F:)</TaskBtn>
        <SmallApps />
        <TaskBtn $w={158} $ml={6}><CheckLogo />理想论坛55188.com</TaskBtn>
        <TaskBtn $w={158} $on $ml={4}><TdxIcon />通达信金融终端超赢...</TaskBtn>
        <Clock>6:39</Clock>
        <Tray $l={1002} $t={7}>
          <TrayIcon width="10" height="10" viewBox="0 0 10 10" $mr={14}><path d="M1 3h6v5H1zM3 1h6v5" fill="none" stroke="#fff" /></TrayIcon>
          <TrayIcon width="14" height="17" viewBox="0 0 14 17" $mr={6}><path d="M7 1l6 2v6c0 4-3 6-6 7-3-1-6-3-6-7V3z" fill="#3ab0e0" stroke="#fff" /><path d="M4 8l2 3 4-5" fill="none" stroke="#fff" strokeWidth="1.5" /></TrayIcon>
          <TrayIcon width="14" height="17" viewBox="0 0 14 17" $mr={6}><path d="M7 1l6 2v6c0 4-3 6-6 7-3-1-6-3-6-7V3z" fill="#bbb" stroke="#eee" /><path d="M8 3L4 9h3l-1 5 4-6H7z" fill="#4a8a30" /></TrayIcon>
          <TrayIcon width="18" height="15" viewBox="0 0 18 15" $mr={5}><path d="M1 14L9 1l2 9z" fill="#d81010" /><path d="M11 10l6 4H8z" fill="#18a030" /></TrayIcon>
          <TrayIcon width="16" height="16" viewBox="0 0 16 16" $mr={5}><circle cx="8" cy="8" r="7.5" fill="#e8e020" stroke="#886" /><path d="M8 4v8M4 8h8" stroke="#111" strokeWidth="2.4" /></TrayIcon>
          <TrayIcon width="15" height="16" viewBox="0 0 15 16" $mr={6}><path d="M1 5h3l5-4v14l-5-4H1z" fill="#e06040" stroke="#ddd" strokeWidth=".6" /><path d="M11 5c2 2 2 4 0 6" stroke="#ccc" fill="none" /></TrayIcon>
          <TrayIcon width="14" height="17" viewBox="0 0 14 17" $mr={7}><rect x="1" y="3" width="12" height="13" rx="1" fill="#e8e8e8" stroke="#333" /><rect x="4" y="1" width="2" height="6" fill="#333" /><rect x="8" y="1" width="2" height="6" fill="#333" /></TrayIcon>
          <TrayIcon width="15" height="14" viewBox="0 0 15 14" $mr={7}><path d="M1 5h2l4-4v12l-4-4H1z" fill="#e4eef4" /><path d="M9 4c1.5 2 1.5 4 0 6M11.5 2c3 3 3 7 0 10" stroke="#e4eef4" fill="none" /></TrayIcon>
          <TrayIcon width="16" height="14" viewBox="0 0 16 14"><path d="M1 10h2v3H1zM5 8h2v5H5zM9 5h2v8H9zM13 1h2v12h-2z" fill="#f4f4f4" /></TrayIcon>
        </Tray>
      </Task>
      <Brand>
        <BrandTop>
          <BrandBig>股海网</BrandBig>
          {"股票软件资源分享".split("").map((c, i) => <BrandBox key={i}>{c}</BrandBox>)}
        </BrandTop>
        <BrandUrl>Www.Guhai.com.cn</BrandUrl>
      </Brand>
      <Water>股海网提供 Www.Guhai.Com.CN</Water>
    </Win>
  );
}
